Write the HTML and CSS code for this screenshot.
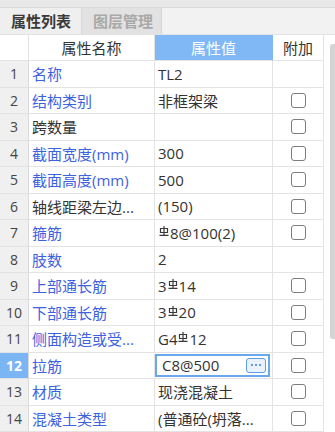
FILE: index.html
```html
<!DOCTYPE html>
<html lang="zh">
<head>
<meta charset="utf-8">
<title>属性列表</title>
<link rel="stylesheet" href="styles.css">
</head>
<body>
<div class="panel">
  <div class="topband"></div>
  <div class="tabbar">
    <div class="tab active">属性列表</div>
    <div class="tab">图层管理</div>
  </div>
  <div class="main">
    <div class="grid">
      <div class="cell hnum"></div>
      <div class="cell hname">属性名称</div>
      <div class="cell hval">属性值</div>
      <div class="cell hadd">附加</div>

      <div class="cell num">1</div>
      <div class="cell name blue">名称</div>
      <div class="cell val">TL2</div>
      <div class="cell add"></div>

      <div class="cell num">2</div>
      <div class="cell name blue">结构类别</div>
      <div class="cell val">非框架梁</div>
      <div class="cell add"><span class="cb"></span></div>

      <div class="cell num">3</div>
      <div class="cell name">跨数量</div>
      <div class="cell val"></div>
      <div class="cell add"><span class="cb"></span></div>

      <div class="cell num">4</div>
      <div class="cell name blue">截面宽度(mm)</div>
      <div class="cell val">300</div>
      <div class="cell add"><span class="cb"></span></div>

      <div class="cell num">5</div>
      <div class="cell name blue">截面高度(mm)</div>
      <div class="cell val">500</div>
      <div class="cell add"><span class="cb"></span></div>

      <div class="cell num">6</div>
      <div class="cell name">轴线距梁左边...</div>
      <div class="cell val">(150)</div>
      <div class="cell add"><span class="cb"></span></div>

      <div class="cell num">7</div>
      <div class="cell name blue">箍筋</div>
      <div class="cell val"><svg class="rb" viewBox="0 0 10 10" width="10" height="10"><path d="M5 0V9M1.5 2.5H8.5V6.5H1.5ZM0.5 9.4H9.5" fill="none" stroke="#3a3a3a" stroke-width="1.2"/></svg>8@100(2)</div>
      <div class="cell add"><span class="cb"></span></div>

      <div class="cell num">8</div>
      <div class="cell name blue">肢数</div>
      <div class="cell val">2</div>
      <div class="cell add"></div>

      <div class="cell num">9</div>
      <div class="cell name blue">上部通长筋</div>
      <div class="cell val">3<svg class="rb" viewBox="0 0 10 10" width="10" height="10"><path d="M5 0V9M1.5 2.5H8.5V6.5H1.5ZM0.5 9.4H9.5" fill="none" stroke="#3a3a3a" stroke-width="1.2"/></svg>14</div>
      <div class="cell add"><span class="cb"></span></div>

      <div class="cell num">10</div>
      <div class="cell name blue">下部通长筋</div>
      <div class="cell val">3<svg class="rb" viewBox="0 0 10 10" width="10" height="10"><path d="M5 0V9M1.5 2.5H8.5V6.5H1.5ZM0.5 9.4H9.5" fill="none" stroke="#3a3a3a" stroke-width="1.2"/></svg>20</div>
      <div class="cell add"><span class="cb"></span></div>

      <div class="cell num">11</div>
      <div class="cell name blue">侧面构造或受...</div>
      <div class="cell val">G4<svg class="rb" viewBox="0 0 10 10" width="10" height="10"><path d="M5 0V9M1.5 2.5H8.5V6.5H1.5ZM0.5 9.4H9.5" fill="none" stroke="#3a3a3a" stroke-width="1.2"/></svg>12</div>
      <div class="cell add"><span class="cb"></span></div>

      <div class="cell num sel">12</div>
      <div class="cell name blue">拉筋</div>
      <div class="cell val editing"><div class="editor"><span>C8@500</span><span class="more"><i></i><i></i><i></i></span></div></div>
      <div class="cell add"><span class="cb"></span></div>

      <div class="cell num">13</div>
      <div class="cell name blue">材质</div>
      <div class="cell val">现浇混凝土</div>
      <div class="cell add"><span class="cb"></span></div>

      <div class="cell num">14</div>
      <div class="cell name blue">混凝土类型</div>
      <div class="cell val">(普通砼(坍落...</div>
      <div class="cell add"><span class="cb"></span></div>
    </div>
    <div class="track"><div class="thumb"></div></div>
  </div>
</div>
</body>
</html>
```

FILE: styles.css
```css
* { box-sizing: border-box; }
html, body { margin: 0; padding: 0; }
body {
  width: 335px;
  height: 432px;
  overflow: hidden;
  background: #ffffff;
  font-family: "Open Sans", "Noto Sans CJK SC", sans-serif;
  font-size: 15px;
  color: #333333;
}
.panel { display: flex; flex-direction: column; width: 335px; height: 432px; }
.topband { height: 8px; background: #e8e8e8; border-bottom: 1px solid #dadada; flex: none; }
.tabbar {
  height: 27px;
  flex: none;
  display: flex;
  background: #f2f2f2;
  border-bottom: 1px solid #e2e2e2;
}
.tab {
  font-family: "Noto Sans CJK SC", sans-serif;
  font-weight: 700;
  font-size: 15px;
  line-height: 26px;
  white-space: nowrap;
  padding: 0 8px 0 11px;
  color: #a9a9a9;
  background: #e2e2e2;
  border-right: 1px solid #d4d4d4;
}
.tab.active { color: #3a3a3a; background: #efefef; padding: 0 10px 0 11px; border-right: 1px solid #d8d8d8; }
.main { display: flex; flex: 1; min-height: 0; }
.grid {
  display: grid;
  grid-template-columns: 29px 126px 118px 51px;
  grid-template-rows: 26px;
  grid-auto-rows: 26.5px;
  width: 324px;
  align-content: start;
}
.cell {
  border-right: 1px solid #e3e3e3;
  border-bottom: 1px solid #e3e3e3;
  display: flex;
  align-items: center;
  white-space: nowrap;
  overflow: hidden;
  min-width: 0;
}
.hnum { background: #ffffff; }
.hname, .hadd { justify-content: center; font-family: "Noto Sans CJK SC", sans-serif; color: #333; }
.hval { justify-content: center; font-family: "Noto Sans CJK SC", sans-serif; color: #ffffff; background: #80b8f6; border-right-color: #80b8f6; }
.num {
  background: #f0f0f0;
  justify-content: center;
  font-size: 14px;
  color: #444444;
  border-right-color: #d9d9d9;
}
.num.sel { background: #7cb5f4; color: #ffffff; font-weight: 700; }
.name { padding-left: 3px; }
.blue { color: #3d62e0; }
.val { padding-left: 3px; }
.rb { align-self: flex-start; margin: 6px 1px 0 1px; flex: none; }
.add { justify-content: center; }
.cb {
  width: 15px;
  height: 15px;
  border: 1px solid #7d7d7d;
  border-radius: 3px;
  background: #ffffff;
}
.editing { padding: 1px 2px 1px 0; }
.editor {
  flex: 1;
  height: 100%;
  border: 2px solid #6aa8ee;
  display: flex;
  align-items: center;
  justify-content: space-between;
  padding: 0 2px 0 5px;
}
.more {
  width: 20px;
  height: 15px;
  border: 1.5px solid #5c9de8;
  border-radius: 3px;
  background: #e9f2fd;
  display: flex;
  align-items: center;
  justify-content: center;
  gap: 2px;
}
.more i { width: 2px; height: 2px; background: #3d7fd6; border-radius: 1px; display: block; }
.track { width: 11px; flex: none; padding: 9px 0 0 6px; }
.thumb { width: 5px; height: 295px; background: #d4d4d4; border-radius: 3px 0 0 3px; }
```
